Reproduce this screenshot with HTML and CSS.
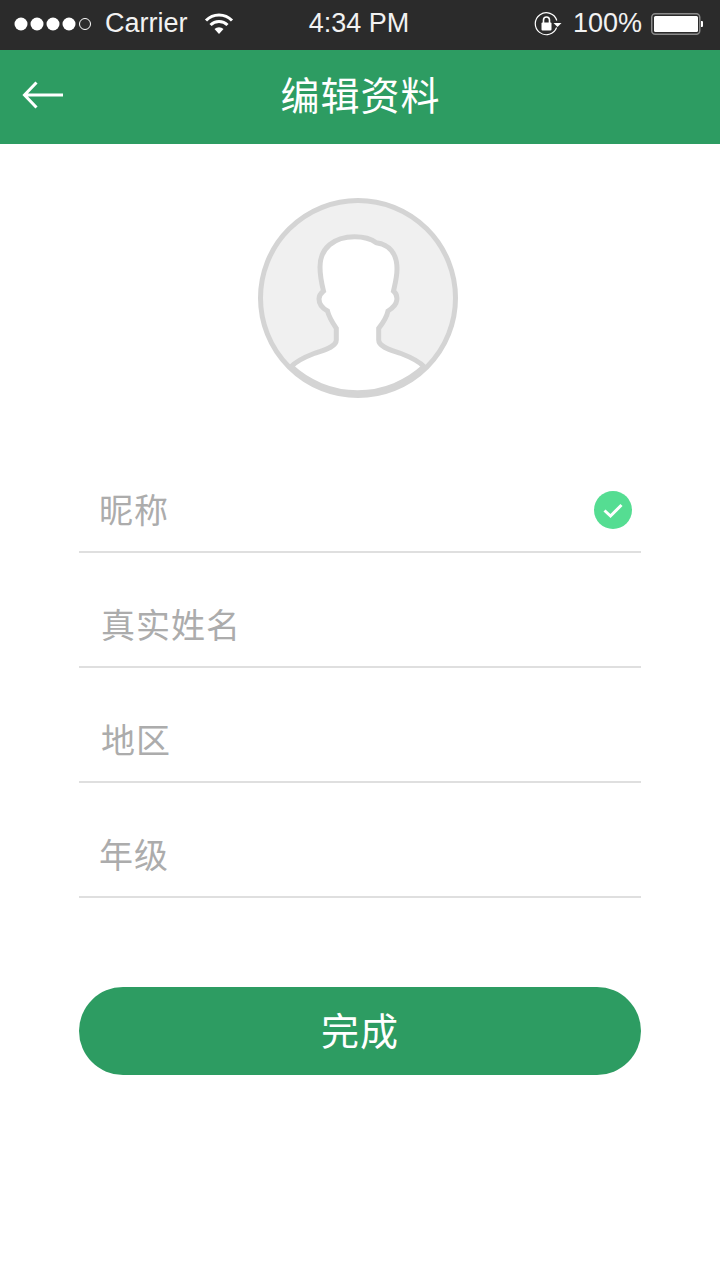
FILE: index.html
```html
<!DOCTYPE html>
<html lang="zh-CN">
<head>
<meta charset="utf-8">
<title>编辑资料</title>
<link rel="stylesheet" href="styles.css">
</head>
<body>
<div class="status">
  <div class="status-left">
    <svg class="signal" width="78" height="16" viewBox="0 0 78 16"><g fill="#fff"><circle cx="7" cy="8" r="6.5"/><circle cx="23" cy="8" r="6.5"/><circle cx="39" cy="8" r="6.5"/><circle cx="55" cy="8" r="6.5"/></g><circle cx="71" cy="8" r="5.5" fill="none" stroke="#fff" stroke-width="1"/></svg>
    <span class="carrier">Carrier</span>
    <svg class="wifi" width="30" height="22" viewBox="0 0 30 22"><g fill="none" stroke="#fff" stroke-width="3"><path d="M2 7.5a18 18 0 0 1 26 0"/><path d="M6.5 12a12 12 0 0 1 17 0"/></g><path d="M10.5 16a6.5 6.5 0 0 1 9 0L15 21z" fill="#fff"/></svg>
  </div>
  <span class="time">4:34 PM</span>
  <div class="status-right">
    <svg class="lock" width="28" height="24" viewBox="0 0 28 24"><path d="M22.6 15.5A11 11 0 1 1 22.8 8.5" fill="none" stroke="#fff" stroke-width="1.2"/><path d="M19.5 11h8l-4 4z" fill="#fff"/><rect x="7.5" y="10.500" width="10" height="8" rx="1" fill="#fff"/><path d="M9.500 11V8a3 3 0 0 1 6 0v3" fill="none" stroke="#fff" stroke-width="1.6"/></svg>
    <span class="percent">100%</span>
    <svg class="battery" width="52" height="22" viewBox="0 0 52 22"><rect x=".75" y=".75" width="49" height="20.500" rx="3.500" fill="none" stroke="#8a8a8a" stroke-width="1.500" transform="scale(.98 1)"/><rect x="3" y="3" width="44" height="16" rx="1.500" fill="#fff"/><path d="M50 8h1a1 1 0 0 1 1 1v4a1 1 0 0 1-1 1h-1z" fill="#fff"/></svg>
  </div>
</div>
<header class="nav">
  <svg class="back" width="42" height="28" viewBox="0 0 42 28"><path d="M41 14H3M14.500 1.500 2.500 14l12 12.500" fill="none" stroke="#fff" stroke-width="3"/></svg>
  <h1 class="title">编辑资料</h1>
</header>
<main class="content">
  <svg class="avatar" width="200" height="200" viewBox="0 0 200 200">
    <circle cx="100" cy="100" r="97.500" fill="#f0f0f0"/>
    <path class="person" d="M33.300 168.700C38 163 47 159 56 155.500C64 152.500 78.300 149.500 78.300 142V130.300C74 124 71 119 69.500 113C64 110 61 106 61 101C61 97 63 95 65.500 93C63 83 62 77 62 69C62 50 76 38.700 96.700 38.700C105 38.700 112 40 118.300 44.700C131 46.500 139 55 139 71C139 79 137.300 85 135.500 93C138 95 139.300 98 138.800 102C138.300 107 134 110.500 130 113C128.500 120 125 125 120.700 130.300V142C120.700 149.500 135 152.500 143 155.500C152 159 161 163 166 168.700A97.500 97.500 0 0 1 33.300 168.700Z"/>
    <circle cx="100" cy="100" r="97.500" fill="none" stroke="#d4d4d4" stroke-width="5"/>
  </svg>
  <form class="form">
    <div class="row"><span class="label tight">昵称</span>
      <svg class="check" width="38" height="38" viewBox="0 0 38 38"><circle cx="19" cy="19" r="19" fill="#55dd92"/><path d="M10.500 19.500l6 5.500 11-11" fill="none" stroke="#fff" stroke-width="3"/></svg>
    </div>
    <div class="row"><span class="label">真实姓名</span></div>
    <div class="row"><span class="label">地区</span></div>
    <div class="row"><span class="label tight">年级</span></div>
    <button class="submit" type="button">完成</button>
  </form>
</main>
</body>
</html>
```

FILE: styles.css
```css
* { box-sizing: border-box; }
html, body { margin: 0; padding: 0; }
body {
  width: 720px;
  height: 1278px;
  background: #fff;
  overflow: hidden;
  font-family: "Noto Sans CJK SC", "Noto Sans", sans-serif;
}
.status {
  height: 50px;
  background: #2b2b2b;
  color: #fff;
  display: grid;
  grid-template-columns: 1fr auto 1fr;
  align-items: center;
  font-family: "Liberation Sans", sans-serif;
  font-size: 27px;
  line-height: 44px;
  padding: 0 17px 2px 14px;
}
.status-left, .status-right { display: flex; align-items: center; }
.status-right { justify-content: flex-end; }
.time { margin: 0 0 2px 1px; color: #f2f2f2; }
.carrier { margin: 0 0 2px 13px; color: #f2f2f2; }
.wifi { margin-left: 16px; }
.percent { margin: 0 0 2px 11px; color: #f2f2f2; }
.battery { margin-left: 9px; }
.nav {
  height: 94px;
  background: #2d9c62;
  position: relative;
  display: flex;
  align-items: center;
  justify-content: center;
}
.back { position: absolute; left: 22px; top: 31px; }
.title {
  margin: 0 0 8px 1px;
  color: #fff;
  font-size: 39px;
  font-weight: 400;
  letter-spacing: 1px;
  line-height: 50px;
}
.content { display: flex; flex-direction: column; align-items: center; padding-top: 54px; }
.avatar { display: block; margin-left: -4px; }
.person { fill: #fff; stroke: #d4d4d4; stroke-width: 5; }
.form { width: 562px; margin-top: 40px; }
.row {
  height: 115px;
  padding: 33px 0 0 22px;
  border-bottom: 2px solid #dfdfdf;
  display: flex;
  align-items: center;
  justify-content: space-between;
}
.label { color: #acacac; font-size: 34px; letter-spacing: 1px; line-height: 50px; margin-bottom: 4px; }
.tight { margin-left: -2px; }
.check { margin-right: 9px; margin-top: -3px; }
.submit {
  display: block;
  width: 100%;
  height: 88px;
  margin-top: 89px;
  border: 0;
  padding: 0 0 6px;
  border-radius: 44px;
  background: #2d9c62;
  color: #fff;
  font-family: inherit;
  font-size: 38px;
  letter-spacing: 1px;
}
```
